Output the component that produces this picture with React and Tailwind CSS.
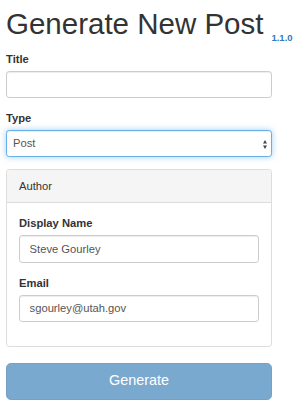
// App.jsx - GENERATE NEW POST FORM
import React from 'react';

const SelectArrows = ({ className }) => (
  <svg className={className} viewBox="0 0 4 9" fill="currentColor">
    <path d="M2 0L4 3.5H0z" />
    <path d="M0 5.5H4L2 9z" />
  </svg>
);

const inputClass =
  'block w-full h-[27.2px] px-[9.6px] rounded-[3.2px] border border-[#ccc] bg-white text-[11.2px] text-[#555] shadow-[inset_0_1px_1px_rgba(0,0,0,0.075)] outline-none';

const labelClass = 'block mb-[4px] text-[11.2px] leading-[16px] font-bold text-[#333]';

export default function App() {
  return (
    <div className="min-h-screen bg-white px-[6px] pt-[8px] font-['Liberation_Sans',Arial,sans-serif] text-[#333]">
      {/* Heading */}
      <div className="flex items-end whitespace-nowrap">
        <h1 className="text-[29.5px] leading-[32px] font-normal text-[#333]">Generate New Post</h1>
        <span className="ml-[8px] mb-[-3px] text-[9.5px] leading-[10px] font-bold text-[#337ab7]">1.1.0</span>
      </div>

      <form className="w-[266px] mt-[11px]">
        <div className="mb-[12px]">
          <label className={labelClass}>Title</label>
          <input type="text" className={inputClass} />
        </div>

        <div className="mb-[12px]">
          <label className={labelClass}>Type</label>
          <div className="relative">
            <select
              defaultValue="post"
              className="block w-full h-[27.2px] pl-[6px] pr-[20px] appearance-none rounded-[3.2px] border border-[#66afe9] bg-white text-[11.2px] text-[#555] shadow-[inset_0_1px_1px_rgba(0,0,0,0.075),0_0_6px_rgba(102,175,233,0.6)] outline-none"
            >
              <option value="post">Post</option>
              <option value="page">Page</option>
            </select>
            <SelectArrows className="absolute right-[5px] top-[9.5px] w-[4px] h-[9px] text-[#444] pointer-events-none" />
          </div>
        </div>

        {/* Author panel */}
        <div className="rounded-[3.2px] border border-[#ddd] bg-white">
          <div className="px-[12px] py-[8px] bg-[#f5f5f5] border-b border-[#ddd] rounded-t-[3px] text-[11.2px] leading-[16px] text-[#333]">
            Author
          </div>
          <div className="p-[12px]">
            <div className="mb-[12px]">
              <label className={labelClass}>Display Name</label>
              <input type="text" defaultValue="Steve Gourley" className={inputClass} />
            </div>
            <div className="mb-[12px]">
              <label className={labelClass}>Email</label>
              <input type="email" defaultValue="sgourley@utah.gov" className={inputClass} />
            </div>
          </div>
        </div>

        <button
          type="button"
          disabled
          className="block w-full mt-[16px] h-[36.8px] rounded-[4.8px] border border-[#77a0c4] bg-[#7aa9d0] text-[14.4px] text-white"
        >
          Generate
        </button>
      </form>
    </div>
  );
}
